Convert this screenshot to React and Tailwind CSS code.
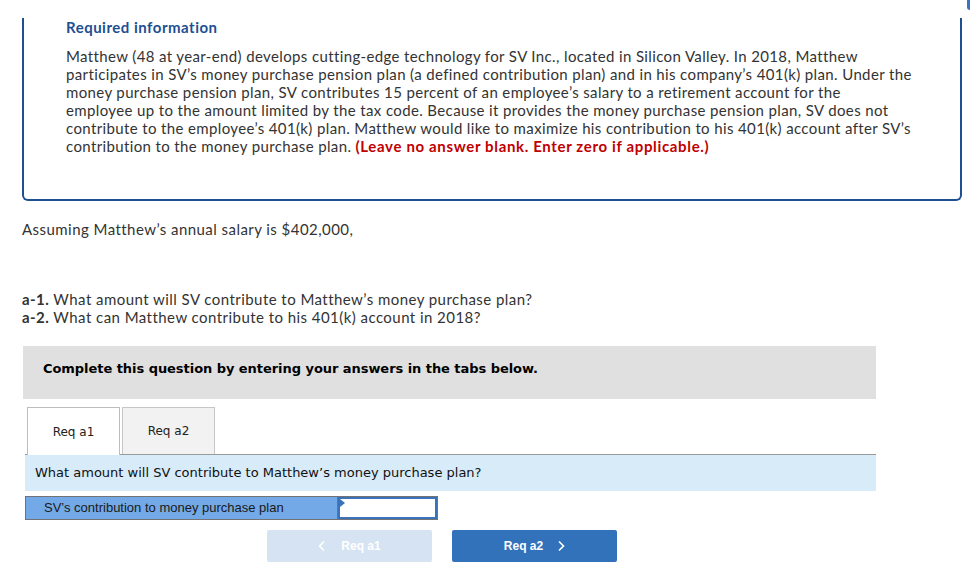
import React from 'react';

const intro = [
  'Matthew (48 at year-end) develops cutting-edge technology for SV Inc., located in Silicon Valley. In 2018, Matthew',
  'participates in SV\u2019s money purchase pension plan (a defined contribution plan) and in his company\u2019s 401(k) plan. Under the',
  'money purchase pension plan, SV contributes 15 percent of an employee\u2019s salary to a retirement account for the',
  'employee up to the amount limited by the tax code. Because it provides the money purchase pension plan, SV does not',
  'contribute to the employee\u2019s 401(k) plan. Matthew would like to maximize his contribution to his 401(k) account after SV\u2019s',
];

function Chevron({ dir = 'right' }) {
  return (
    <svg width="8" height="12" viewBox="0 0 8 12" fill="none" stroke="currentColor" strokeWidth="1.6">
      {dir === 'right' ? <path d="M2 1.5 L6.5 6 L2 10.5" /> : <path d="M6 1.5 L1.5 6 L6 10.5" />}
    </svg>
  );
}

export default function App() {
  const sans = { fontFamily: 'Lato, "Open Sans", sans-serif' };
  return (
    <div className="relative w-[970px] h-[580px] bg-white overflow-hidden text-[#222]" style={sans}>
      {/* scroll marker top right */}
      <div className="absolute right-0 top-0 w-[3px] h-[10px] rounded-bl bg-[#3a74c0]" />

      {/* Required information box */}
      <div className="ml-[22px] mt-[18px] w-[940px] h-[183px] border-x-2 border-b-2 border-[#1d4f91] rounded-b-[6px] pl-[42px] pt-[1px]">
        <div className="text-[15px] font-bold text-[#1d4f91] leading-[18px] -mt-[1px] tracking-[0.5px]">Required information</div>
        <div className="mt-[11px] text-[15px] leading-[18px] text-[#333] tracking-[0.37px]">
          {intro.map((l, i) => (
            <div key={i} className="whitespace-nowrap">{l}</div>
          ))}
          <div className="whitespace-nowrap">
            contribution to the money purchase plan.{' '}
            <span className="font-bold text-[#c00000] tracking-[0.65px]">(Leave no answer blank. Enter zero if applicable.)</span>
          </div>
        </div>
      </div>

      <div className="ml-[22px] mt-[19px] text-[15px] leading-[18px] text-[#333] tracking-[0.45px]">
        Assuming Matthew&rsquo;s annual salary is $402,000,
      </div>

      <div className="ml-[22px] mt-[52px] text-[15px] leading-[18px] text-[#333] tracking-[0.45px]">
        <div><span className="font-bold">a-1.</span> What amount will SV contribute to Matthew&rsquo;s money purchase plan?</div>
        <div><span className="font-bold">a-2.</span> What can Matthew contribute to his 401(k) account in 2018?</div>
      </div>

      {/* instructions */}
      <div
        className="ml-[23px] mt-[20px] w-[853px] h-[53px] bg-[#e0e0e0] pl-[20px] pt-[13px] text-[13px] font-bold text-black tracking-[-0.05px]"
        style={{ fontFamily: '"DejaVu Sans", Verdana, sans-serif' }}
      >
        Complete this question by entering your answers in the tabs below.
      </div>

      {/* tabs */}
      <div className="ml-[25px] mt-[8px] w-[851px]" style={{ fontFamily: '"DejaVu Sans", Verdana, sans-serif' }}>
        <div className="flex items-end gap-[2px] pl-[2px]">
          <div className="w-[93px] h-[48px] bg-white border border-b-0 border-[#bdbdbd] flex items-center justify-center text-[12px] text-[#222] relative -mb-[1px] z-10">
            Req a1
          </div>
          <div className="w-[93px] h-[47px] bg-[#f2f2f2] border border-b-0 border-[#c6c6c6] flex items-center justify-center text-[12px] text-[#222]">
            Req a2
          </div>
        </div>
        <div className="h-[37px] bg-[#d8ebf8] border-t border-[#9a9a9a] flex items-center pl-[10px] text-[13px] text-[#111]">
          What amount will SV contribute to Matthew&rsquo;s money purchase plan?
        </div>

        {/* answer row */}
        <div className="mt-[5px] flex w-[413px] h-[24px] border border-[#737373]">
          <div
            className="w-[312px] bg-[#72a9e6] border-r border-[#737373] pl-[18px] flex items-center text-[13px] text-[#1a1a1a]"
            style={{ fontFamily: '"Liberation Sans", Arial, sans-serif' }}
          >
            SV&rsquo;s contribution to money purchase plan
          </div>
          <div className="relative flex-1 bg-white border-2 border-[#3a73ba]">
            <div className="absolute left-0 top-0 w-0 h-0 border-t-[4px] border-b-[4px] border-l-[5px] border-t-transparent border-b-transparent border-l-[#3a73ba]" />
          </div>
        </div>
      </div>

      {/* nav buttons */}
      <div className="flex gap-[20px] ml-[267px] mt-[10px]" style={{ fontFamily: '"Liberation Sans", Arial, sans-serif' }}>
        <div className="w-[165px] h-[32px] rounded-[2px] bg-[#d6e3f2] text-white flex items-center justify-center gap-[15px] text-[12px] font-bold">
          <Chevron dir="left" />
          <span>Req a1</span>
        </div>
        <div className="w-[165px] h-[32px] rounded-[2px] bg-[#3272bb] text-white flex items-center justify-center gap-[14px] text-[12px] font-bold">
          <span>Req a2</span>
          <Chevron dir="right" />
        </div>
      </div>
    </div>
  );
}
